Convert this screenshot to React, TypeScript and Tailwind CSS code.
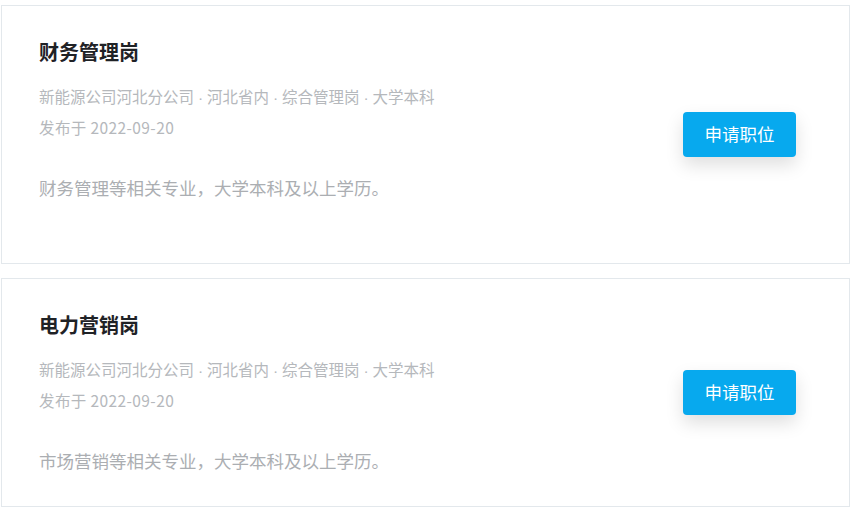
import React from "react";

const jobs = [
  {
    title: "财务管理岗",
    desc: "财务管理等相关专业，大学本科及以上学历。",
    h: "h-[259px]",
  },
  {
    title: "电力营销岗",
    desc: "市场营销等相关专业，大学本科及以上学历。",
    h: "h-[229px]",
  },
];

const tags = ["新能源公司河北分公司", "河北省内", "综合管理岗", "大学本科"];

function Sep() {
  return (
    <span className="inline-block w-[13px] text-center" style={{ fontFamily: '"Liberation Sans", sans-serif' }}>
      ·
    </span>
  );
}

export default function App() {
  return (
    <div
      className="w-[853px] h-[508px] bg-white pt-[5px] pl-[1px] pr-[3px] flex flex-col gap-[14px] overflow-hidden"
      style={{ fontFamily: '"Noto Sans CJK SC", "Noto Sans", sans-serif' }}
    >
      {jobs.map((j) => (
        <div
          key={j.title}
          className={`${j.h} border border-[#e3e8ec] bg-white flex items-center justify-between pl-[37px] pr-[53px]`}
        >
          <div className="self-start pt-[32px]">
            <div className="text-[20px] leading-[28px] font-bold text-[#1f2226]">{j.title}</div>
            <div className="mt-[15px] text-[15.5px] leading-[30px] text-[#b5b8bc] whitespace-nowrap">
              {tags.map((t, i) => (
                <React.Fragment key={t}>
                  {i > 0 && <Sep />}
                  {t}
                </React.Fragment>
              ))}
            </div>
            <div className="text-[15.5px] leading-[28px] text-[#b5b8bc] tracking-[0.4px]">发布于 2022-09-20</div>
            <div className="mt-[32px] text-[17.5px] leading-[30px] text-[#abaeb2]">{j.desc}</div>
          </div>
          <button className="w-[113px] h-[45px] rounded-[4px] bg-[#07a9ee] text-white text-[17.5px] shadow-[0_8px_18px_rgba(0,0,0,0.13)]">
            申请职位
          </button>
        </div>
      ))}
    </div>
  );
}
